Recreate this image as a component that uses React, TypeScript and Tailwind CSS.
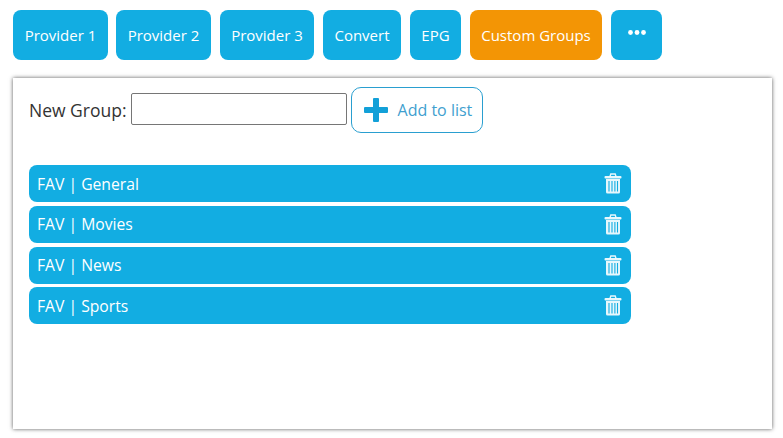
const tabs = [
  { label: "Provider 1", width: "w-[95px] mr-[8px]" },
  { label: "Provider 2", width: "w-[95px] mr-[9px]" },
  { label: "Provider 3", width: "w-[94px] mr-[9px]" },
  { label: "Convert", width: "w-[78px] mr-[9px]" },
  { label: "EPG", width: "w-[51px] mr-[9px]" },
];

const groups = [
  { name: "FAV | General", rowClass: "mb-[4px]", textClass: "pt-[2px]" },
  { name: "FAV | Movies", rowClass: "mb-[4px]", textClass: "" },
  { name: "FAV | News", rowClass: "mb-[3px]", textClass: "" },
  { name: "FAV | Sports", rowClass: "", textClass: "pt-[2px]" },
];

function TrashIcon() {
  return (
    <svg width="18" height="21" viewBox="0 0 18 21" fill="none" className="text-white/90">
      <path d="M6 3.5 L6.8 1 H11.2 L12 3.5" stroke="currentColor" strokeWidth="1.4" />
      <rect x="0.5" y="3" width="17" height="2.4" rx="1" fill="currentColor" />
      <path d="M2 6 H16 V19 Q16 20.5 14.5 20.5 H3.5 Q2 20.5 2 19 Z" fill="currentColor" />
      <path d="M5 8 V18.5 M8 8 V18.5 M10.9 8 V18.5 M13.5 8 V18.5" stroke="#12ade2" strokeWidth="1.1" />
    </svg>
  );
}

export default function App() {
  return (
    <div className="h-[438px] w-[783px] overflow-hidden bg-white font-['Open_Sans',sans-serif]">
      <div className="flex pl-[13px] pt-[10px]">
        {tabs.map((tab) => (
          <button
            key={tab.label}
            type="button"
            className={`h-[50px] ${tab.width} rounded-[8px] bg-[#12ade2] text-[15px] text-white`}
          >
            {tab.label}
          </button>
        ))}
        <button type="button" className="mr-[9px] h-[50px] w-[132px] rounded-[8px] bg-[#f39505] text-[15px] text-white">
          Custom Groups
        </button>
        <button
          type="button"
          className="flex h-[50px] w-[51px] items-center justify-center rounded-[8px] bg-[#12ade2] pb-[5px]"
        >
          <svg width="18" height="5" viewBox="0 0 18 5" fill="white">
            <circle cx="2.5" cy="2.5" r="2.4" />
            <circle cx="9" cy="2.5" r="2.4" />
            <circle cx="15.5" cy="2.5" r="2.4" />
          </svg>
        </button>
      </div>

      <div className="ml-[13px] mt-[18px] h-[351px] w-[759px] bg-white pl-[16px] pt-[9px] shadow-[0_0_4px_rgba(0,0,0,0.65)]">
        <div className="flex items-center">
          <span className="text-[17.5px] text-[#333333]">New Group:</span>
          <input
            type="text"
            className="mb-[2px] ml-[4px] h-[32px] w-[216px] rounded-[2px] border border-[#767676] bg-white"
          />
          <button
            type="button"
            className="ml-[4px] flex h-[46px] w-[132px] items-center rounded-[10px] border border-[#2a9fd0] bg-white pl-[12px]"
          >
            <svg width="24" height="24" viewBox="0 0 24 24" fill="#12a0d8">
              <path d="M9 1 Q9 0 10 0 H14 Q15 0 15 1 V9 H23 Q24 9 24 10 V14 Q24 15 23 15 H15 V23 Q15 24 14 24 H10 Q9 24 9 23 V15 H1 Q0 15 0 14 V10 Q0 9 1 9 H9 Z" />
            </svg>
            <span className="ml-[10px] text-[16px] text-[#3f9fcf]">Add to list</span>
          </button>
        </div>

        <div className="mt-[32px] w-[602px]">
          {groups.map((group) => (
            <div
              key={group.name}
              className={`flex h-[37px] items-center justify-between rounded-[8px] bg-[#12ade2] pl-[8px] pr-[9px] ${group.rowClass}`}
            >
              <span className={`text-[15.7px] text-white ${group.textClass}`}>{group.name}</span>
              <TrashIcon />
            </div>
          ))}
        </div>
      </div>
    </div>
  );
}
